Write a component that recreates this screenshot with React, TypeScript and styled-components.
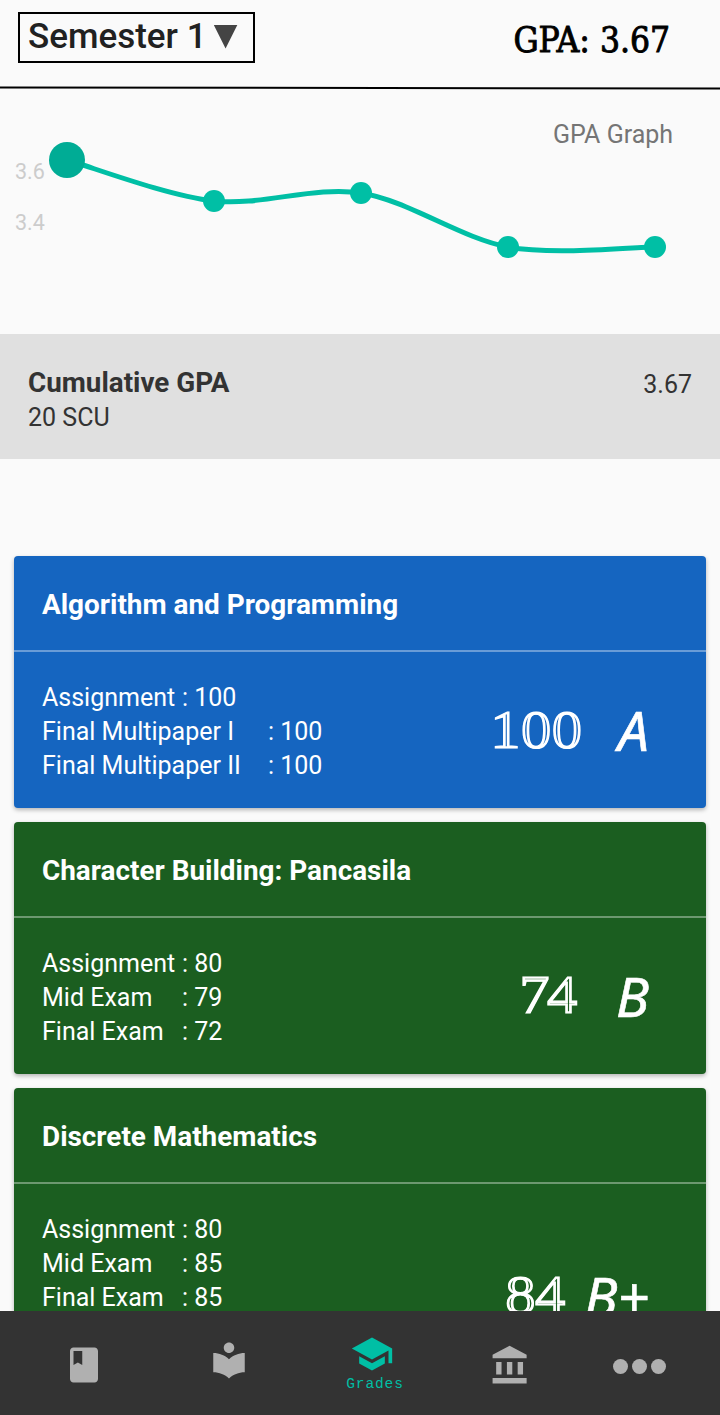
import React from "react";
import styled, { createGlobalStyle } from "styled-components";

const GlobalStyle = createGlobalStyle`
  * { box-sizing: border-box; }
  body { margin: 0; background: #fafafa; font-family: Roboto, sans-serif; }
`;

const Screen = styled.div`
  display: flex;
  flex-direction: column;
  width: 720px;
  height: 1415px;
  overflow: hidden;
  background: #fafafa;
`;

const Header = styled.header`
  flex: none;
  display: flex;
  justify-content: space-between;
  align-items: flex-start;
  height: 87px;
  padding: 12px 50px 0 18px;
`;

const SemesterSelect = styled.button`
  display: flex;
  align-items: center;
  gap: 8px;
  width: 237px;
  height: 51px;
  padding: 0 0 2px 8px;
  border: 2px solid #000;
  background: transparent;
  color: #212121;
  font: 500 35px/41px Roboto, sans-serif;
  white-space: nowrap;
`;

const Caret = styled.span`
  width: 24px;
  height: 24px;
  margin-left: -1px;
  background: #444;
  clip-path: polygon(0 0, 100% 0, 50% 100%);
`;

const GpaHeading = styled.h1`
  margin: 7px 0 0;
  color: #000;
  font: 400 35px/42px "DejaVu Serif Condensed", "DejaVu Serif", serif;
  font-stretch: condensed;
  white-space: nowrap;
  -webkit-text-stroke: 0.9px #000;
`;

const Divider = styled.div`
  flex: none;
  height: 2px;
  background: #000;
  transform: rotate(0.09deg);
`;

const GraphPanel = styled.section`
  flex: none;
  height: 245px;
`;

const Chart = styled.svg`
  display: block;
  font-family: Roboto, sans-serif;
`;

const Summary = styled.section`
  flex: none;
  display: flex;
  justify-content: space-between;
  height: 125px;
  padding: 32px 28px 0;
  background: #e0e0e0;
  color: #333;
  font-size: 25px;
  line-height: 35px;
`;

const SummaryTitle = styled.div`
  font-size: 27.8px;
  font-weight: 700;
  line-height: 34px;
`;

const SummaryValue = styled.div`
  padding-top: 1px;
`;

const CourseList = styled.main`
  flex: 1;
  min-height: 0;
  display: flex;
  flex-direction: column;
  gap: 14px;
  padding: 97px 14px 0;
  overflow: hidden;
`;

const Card = styled.article<{ $color: string }>`
  flex: none;
  border-radius: 4px;
  background: ${(p) => p.$color};
  color: #fff;
  box-shadow: 0 2px 4px rgba(0, 0, 0, 0.28);
`;

const CardTitle = styled.h2`
  height: 96px;
  margin: 0;
  padding: 0 28px;
  border-bottom: 2px solid rgba(255, 255, 255, 0.36);
  font-size: 27.9px;
  font-weight: 700;
  line-height: 97px;
`;

const CardBody = styled.div<{ $height: number }>`
  display: flex;
  justify-content: space-between;
  height: ${(p) => p.$height}px;
  padding: 0 57px 0 28px;
`;

const Components = styled.dl`
  margin: 0;
  padding-top: 29px;
  font-size: 25px;
  line-height: 34px;
`;

const Row = styled.div`
  display: flex;
  white-space: pre;
`;

const Label = styled.dt<{ $width: number }>`
  width: ${(p) => p.$width}px;
`;

const Value = styled.dd`
  margin: 0;
`;

const Result = styled.div<{ $gap: number }>`
  display: flex;
  align-items: center;
  gap: ${(p) => p.$gap}px;
`;

const ScoreArt = styled.svg<{ $lift: number }>`
  overflow: visible;
  margin-bottom: ${(p) => p.$lift * 2}px;
  font: 400 54px "Liberation Serif", serif;
`;

const Letter = styled.span`
  font: italic 400 55px/70px "Noto Sans", sans-serif;
  -webkit-text-stroke: 0.6px #fff;
`;

const NavBar = styled.nav`
  flex: none;
  display: grid;
  grid-template-columns: 168px 122px 164px 112px 147px;
  height: 104px;
  background: #333;
`;

const NavItem = styled.a<{ $top: number; $active?: boolean }>`
  display: flex;
  flex-direction: column;
  align-items: center;
  padding-top: ${(p) => p.$top}px;
  color: ${(p) => (p.$active ? "#00bfa5" : "#b0b0b0")};
`;

const NavLabel = styled.span`
  padding-left: 6px;
  font: 400 14.5px/16px "Liberation Mono", monospace;
  letter-spacing: 0.9px;
`;

const BLUE = "#1565c0";
const GREEN = "#1b5e20";

const courses = [
  {
    title: "Algorithm and Programming",
    color: BLUE,
    rows: [["Assignment", "100", 140], ["Final Multipaper I", "100", 226], ["Final Multipaper II", "100", 226]],
    score: "100",
    scoreWidth: 88,
    inset: 6,
    tracking: 0,
    letter: "A",
    gap: 34,
    lift: 0,
    height: 156,
  },
  {
    title: "Character Building: Pancasila",
    color: GREEN,
    rows: [["Assignment", "80", 140], ["Mid Exam", "79", 140], ["Final Exam", "72", 140]],
    score: "74",
    scoreWidth: 56,
    inset: 1,
    tracking: -3,
    letter: "B",
    gap: 40,
    lift: 1,
    height: 156,
  },
  {
    title: "Discrete Mathematics",
    color: GREEN,
    rows: [["Assignment", "80", 140], ["Mid Exam", "85", 140], ["Final Exam", "85", 140]],
    score: "84",
    scoreWidth: 58,
    inset: 2,
    tracking: -1,
    letter: "B+",
    gap: 20,
    lift: 1,
    height: 224,
  },
] as const;

const points = [[67, 71], [214, 112], [361, 104], [508, 158], [655, 158]];

function GpaChart() {
  return (
    <Chart width="720" height="245" viewBox="0 0 720 245">
      <text x="553" y="53.5" fontSize="25" fill="#757575">GPA Graph</text>
      <text x="15" y="89.5" fontSize="21.5" fill="#ccc">3.6</text>
      <text x="15" y="140.5" fontSize="21.5" fill="#ccc">3.4</text>
      <path
        d="M67 71C90.5 77.6 167 106.7 214 112S314 96.6 361 104S461 149.4 508 158S631.5 158 655 158"
        fill="none"
        stroke="#00bfa5"
        strokeWidth="5"
      />
      {points.map(([x, y], i) => (
        <circle key={x} cx={x} cy={y} r={i === 0 ? 18 : 11} fill={i === 0 ? "#00ac95" : "#00bfa5"} />
      ))}
    </Chart>
  );
}

type ScoreProps = { value: string; width: number; inset: number; tracking: number; fill: string; lift: number };

// Engraved numerals: white glyphs whose thick stems carry a thin line of the card colour.
function Score({ value, width, inset, tracking, fill, lift }: ScoreProps) {
  const id = `score-${value}`;
  const place = { transform: `translate(${-inset} 36) scale(1.14 1)`, letterSpacing: tracking / 1.14 };
  return (
    <ScoreArt width={width} height={36} $lift={lift}>
      <clipPath id={id}>
        <text {...place}>{value}</text>
      </clipPath>
      <text {...place} fill="#fff" stroke="#fff" strokeWidth="1.1">{value}</text>
      <g clipPath={`url(#${id})`} aria-hidden="true">
        <text {...place} fill={fill} stroke="#fff" strokeWidth="3.5">{value}</text>
      </g>
    </ScoreArt>
  );
}

function Icon({ size, d }: { size: number; d: string }) {
  return (
    <svg width={size} height={size} viewBox="0 0 24 24" fill="currentColor">
      <path d={d} />
    </svg>
  );
}

export default function App() {
  return (
    <>
      <GlobalStyle />
      <Screen>
        <Header>
          <SemesterSelect>
            Semester 1<Caret />
          </SemesterSelect>
          <GpaHeading>GPA: 3.67</GpaHeading>
        </Header>
        <Divider />
        <GraphPanel>
          <GpaChart />
        </GraphPanel>
        <Summary>
          <div>
            <SummaryTitle>Cumulative GPA</SummaryTitle>
            <div>20 SCU</div>
          </div>
          <SummaryValue>3.67</SummaryValue>
        </Summary>
        <CourseList>
          {courses.map((c) => (
            <Card key={c.title} $color={c.color}>
              <CardTitle>{c.title}</CardTitle>
              <CardBody $height={c.height}>
                <Components>
                  {c.rows.map(([label, value, width]) => (
                    <Row key={label}>
                      <Label $width={width}>{label}</Label>
                      <Value>: {value}</Value>
                    </Row>
                  ))}
                </Components>
                <Result $gap={c.gap}>
                  <Score
                    value={c.score}
                    width={c.scoreWidth}
                    inset={c.inset}
                    tracking={c.tracking}
                    fill={c.color}
                    lift={c.lift}
                  />
                  <Letter>{c.letter}</Letter>
                </Result>
              </CardBody>
            </Card>
          ))}
        </CourseList>
        <NavBar>
          <NavItem $top={33}>
            <Icon size={42} d="M18 2H6c-1.1 0-2 .9-2 2v16c0 1.1.9 2 2 2h12c1.1 0 2-.9 2-2V4c0-1.1-.9-2-2-2zM6 4h5v8l-2.5-1.5L6 12V4z" />
          </NavItem>
          <NavItem $top={28}>
            <Icon size={42} d="M12 11.55C9.64 9.35 6.48 8 3 8v11c3.48 0 6.64 1.35 9 3.55 2.36-2.19 5.52-3.55 9-3.55V8c-3.48 0-6.64 1.35-9 3.55zM12 8c1.66 0 3-1.34 3-3s-1.34-3-3-3-3 1.34-3 3 1.34 3 3 3z" />
          </NavItem>
          <NavItem $top={21} $active>
            <Icon size={44} d="M5 13.18v4L12 21l7-3.82v-4L12 17l-7-3.82zM12 3L1 9l11 6 9-4.91V17h2V9L12 3z" />
            <NavLabel>Grades</NavLabel>
          </NavItem>
          <NavItem $top={33}>
            <Icon size={43} d="M4 10v7h3v-7H4zm6 0v7h3v-7h-3zM2 22h19v-3H2v3zm14-12v7h3v-7h-3zm-4.5-9L2 6v2h19V6l-9.5-5z" />
          </NavItem>
          <NavItem $top={48}>
            <svg width="53" height="15" viewBox="0 0 53 15" fill="currentColor">
              <circle cx="7.5" cy="7.5" r="7.5" />
              <circle cx="26.5" cy="7.5" r="7.5" />
              <circle cx="45.5" cy="7.5" r="7.5" />
            </svg>
          </NavItem>
        </NavBar>
      </Screen>
    </>
  );
}
